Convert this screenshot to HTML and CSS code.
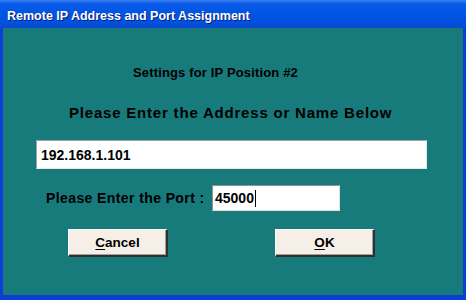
FILE: index.html
```html
<!DOCTYPE html>
<html>
<head>
<meta charset="utf-8">
<link rel="stylesheet" href="styles.css">
</head>
<body>
<div class="window">
  <div class="titlebar">Remote IP Address and Port Assignment</div>
  <div class="client">
    <div class="heading">Settings for IP Position #2</div>
    <div class="prompt">Please Enter the Address or Name Below</div>
    <div class="addr-box">192.168.1.101</div>
    <div class="port-row">
      <span class="port-label">Please Enter the Port :</span>
      <div class="port-box">45000<span class="caret"></span></div>
    </div>
    <div class="buttons">
      <div class="btn cancel"><u>C</u>ancel</div>
      <div class="btn ok"><u>O</u>K</div>
    </div>
  </div>
</div>
</body>
</html>
```
FILE: styles.css
```css
html, body {
  margin: 0;
  padding: 0;
  width: 466px;
  height: 300px;
  overflow: hidden;
  background: #0a3ccf;
}
.window {
  width: 466px;
  height: 300px;
  display: flex;
  flex-direction: column;
  background: #0b3fd6;
  font-family: "Liberation Sans", Arial, sans-serif;
  font-weight: bold;
}
.titlebar {
  height: 28px;
  box-sizing: border-box;
  padding: 9px 0 0 7px;
  color: #fff;
  font-size: 12.5px;
  background: linear-gradient(to bottom, #3a80f5 0px, #0a5ae8 4px, #0055e3 14px, #0450dc 24px, #0a48cf 28px);
  text-shadow: 1px 1px 0 #0a1a70;
}
.client {
  flex: 1;
  margin: 0 3px 5px 3px;
  background: #177a7b;
  display: flex;
  flex-direction: column;
  color: #000;
  font-size: 13px;
}
.heading {
  margin: 37px 0 0 130px;
  line-height: 15px;
  letter-spacing: 0.15px;
}
.prompt {
  margin: 25px 0 0 66px;
  font-size: 15px;
  letter-spacing: 0.8px;
  line-height: 16px;
}
.addr-box {
  margin: 19px 0 0 33px;
  width: 391px;
  height: 29px;
  box-sizing: border-box;
  background: #fff;
  border: 1px solid #a0a0a0;
  border-right-color: #e8e8e8;
  border-bottom-color: #e8e8e8;
  font-size: 14px;
  padding: 6px 0 0 4px;
}
.port-row {
  display: flex;
  align-items: center;
  margin: 16px 0 0 43px;
}
.port-label {
  width: 166px;
  font-size: 14px;
  letter-spacing: 0.4px;
}
.port-box {
  width: 128px;
  height: 26px;
  box-sizing: border-box;
  background: #fff;
  border: 1px solid #909090;
  border-right-color: #e0e0e0;
  border-bottom-color: #e0e0e0;
  font-size: 14px;
  padding: 4px 0 0 2px;
  display: flex;
  align-items: flex-start;
}
.caret {
  display: inline-block;
  width: 1px;
  height: 17px;
  background: #000;
  margin-left: 1px;
}
.buttons {
  display: flex;
  margin: 18px 0 0 65px;
}
.btn {
  width: 100px;
  height: 28px;
  box-sizing: border-box;
  background: #f6efe8;
  border: 1px solid #fff;
  border-right: 2px solid #303030;
  border-bottom: 2px solid #303030;
  box-shadow: inset -1px -1px 0 #a0a0a0;
  text-align: center;
  font-size: 13.5px;
  line-height: 25px;
}
.btn u {
  text-decoration-thickness: 1px;
  text-underline-offset: 2px;
}
.ok {
  margin-left: 107px;
}
```
